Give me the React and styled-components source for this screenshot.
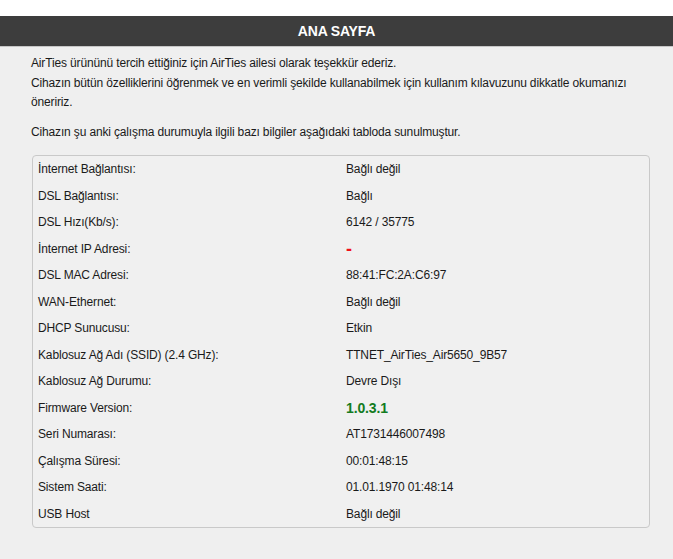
import React from 'react'
import styled, { createGlobalStyle } from 'styled-components'

const GlobalStyle = createGlobalStyle`
  html, body {
    margin: 0;
    padding: 0;
    background: #efefef;
  }
  body {
    font-family: 'Liberation Sans', Arial, Helvetica, sans-serif;
    font-size: 12px;
    color: #1a1a1a;
  }
`

const rows = [
  { label: 'İnternet Bağlantısı:', value: 'Bağlı değil' },
  { label: 'DSL Bağlantısı:', value: 'Bağlı' },
  { label: 'DSL Hızı(Kb/s):', value: '6142 / 35775' },
  { label: 'İnternet IP Adresi:', value: '-', kind: 'error' },
  { label: 'DSL MAC Adresi:', value: '88:41:FC:2A:C6:97' },
  { label: 'WAN-Ethernet:', value: 'Bağlı değil' },
  { label: 'DHCP Sunucusu:', value: 'Etkin' },
  { label: 'Kablosuz Ağ Adı (SSID) (2.4 GHz):', value: 'TTNET_AirTies_Air5650_9B57' },
  { label: 'Kablosuz Ağ Durumu:', value: 'Devre Dışı' },
  { label: 'Firmware Version:', value: '1.0.3.1', kind: 'version' },
  { label: 'Seri Numarası:', value: 'AT1731446007498' },
  { label: 'Çalışma Süresi:', value: '00:01:48:15' },
  { label: 'Sistem Saati:', value: '01.01.1970 01:48:14' },
  { label: 'USB Host', value: 'Bağlı değil' },
]

function App() {
  return (
    <Page>
      <GlobalStyle />
      <TopStrip />
      <TitleBar>ANA SAYFA</TitleBar>
      <Content>
        <Intro>
          AirTies ürününü tercih ettiğiniz için AirTies ailesi olarak teşekkür ederiz.
          <br />
          Cihazın bütün özelliklerini öğrenmek ve en verimli şekilde kullanabilmek için
          kullanım kılavuzunu dikkatle okumanızı öneririz.
        </Intro>
        <Intro>
          Cihazın şu anki çalışma durumuyla ilgili bazı bilgiler aşağıdaki tabloda
          sunulmuştur.
        </Intro>
        <StatusBox>
          {rows.map((r) => (
            <Row key={r.label}>
              <Label>{r.label}</Label>
              <Value kind={r.kind}>{r.value}</Value>
            </Row>
          ))}
        </StatusBox>
      </Content>
    </Page>
  )
}

const Page = styled.div`
  min-height: 559px;
  background: #efefef;
`

const TopStrip = styled.div`
  height: 16px;
  background: #ffffff;
`

const TitleBar = styled.h1`
  margin: 0;
  height: 30px;
  line-height: 31px;
  background: #3d3d3d;
  border-bottom: 1px solid #c6c6c6;
  color: #ffffff;
  font-size: 14px;
  font-weight: bold;
  text-align: center;
  letter-spacing: -0.2px;
`

const Content = styled.div`
  padding: 7px 23px 0 31px;
  display: flex;
  flex-direction: column;
`

const Intro = styled.p`
  margin: 0 0 10px;
  line-height: 19.5px;
  letter-spacing: -0.15px;
`

const StatusBox = styled.div`
  margin: 3px 0 0 1px;
  border: 1px solid #c9c9c9;
  border-radius: 4px;
  background: #f0f0f0;
  display: flex;
  flex-direction: column;
`

const Row = styled.div`
  display: grid;
  grid-template-columns: 50% 50%;
  height: 26.5px;
  align-items: center;
`

const Label = styled.div`
  padding-left: 5px;
  letter-spacing: -0.15px;
`

const valueColor = { error: '#f0101a', version: '#137b22' }
const valueSize = { error: '18px', version: '14px' }

const Value = styled.div`
  padding-left: 5px;
  letter-spacing: -0.15px;
  line-height: 16px;
  color: ${(p) => valueColor[p.kind] || '#1a1a1a'};
  font-weight: ${(p) => (p.kind ? 'bold' : 'normal')};
  font-size: ${(p) => valueSize[p.kind] || '12px'};
`

export default App
